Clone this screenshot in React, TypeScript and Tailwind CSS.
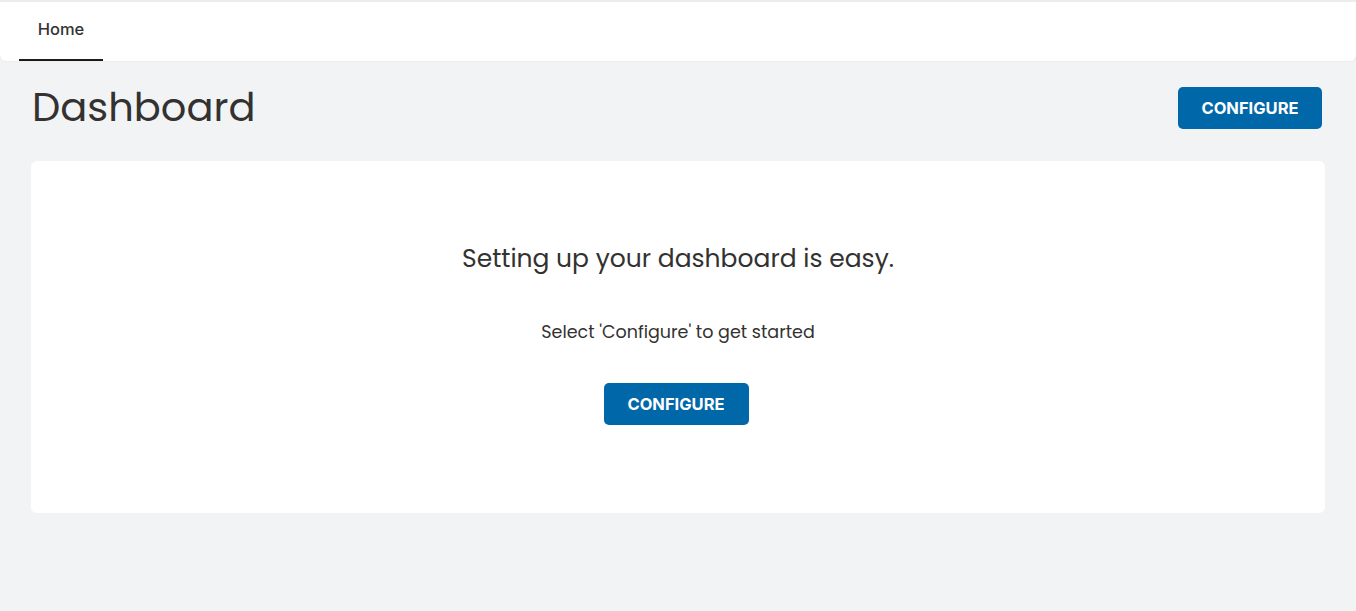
export default function App() {
  return (
    <div className="min-h-screen bg-[#f2f3f5] text-[#333230]" style={{ fontFamily: '"Poppins", Lato, "Noto Sans", sans-serif' }}>
      {/* top nav */}
      <nav className="h-[61px] bg-white rounded-b-md shadow-[0_-1px_3px_rgba(0,0,0,0.15)] border-t-2 border-[#ececec] flex items-stretch pl-[19px]">
        <a className="w-[84px] flex items-center justify-center border-b-2 border-[#1b1b1b] font-['Inter',sans-serif] text-[16.5px] font-medium text-[#333] pb-[3px]">
          Home
        </a>
      </nav>

      <main className="px-[31px] pt-[26px]">
        <div className="flex items-start justify-between pr-[3px]">
          <h1 className="text-[40px] leading-[44px] text-[#333230] ml-[1px] mt-[-2px]">Dashboard</h1>
          <button className="w-[144px] h-[42px] rounded-[5px] bg-[#0067a9] text-white font-['Inter',sans-serif] text-[16.5px] font-bold">
            CONFIGURE
          </button>
        </div>

        <section className="mt-[32px] h-[352px] bg-white rounded-md flex flex-col items-center pt-[80px]">
          <h2 className="text-[25px] leading-[36px] text-[#333230]">Setting up your dashboard is easy.</h2>
          <p className="mt-[43px] text-[17.5px] leading-[24px] text-[#333230]">Select 'Configure' to get started</p>
          <button className="mt-[39px] mr-[4px] w-[145px] h-[42px] rounded-[5px] bg-[#0067a9] text-white font-['Inter',sans-serif] text-[16.5px] font-bold">
            CONFIGURE
          </button>
        </section>
      </main>
    </div>
  );
}
